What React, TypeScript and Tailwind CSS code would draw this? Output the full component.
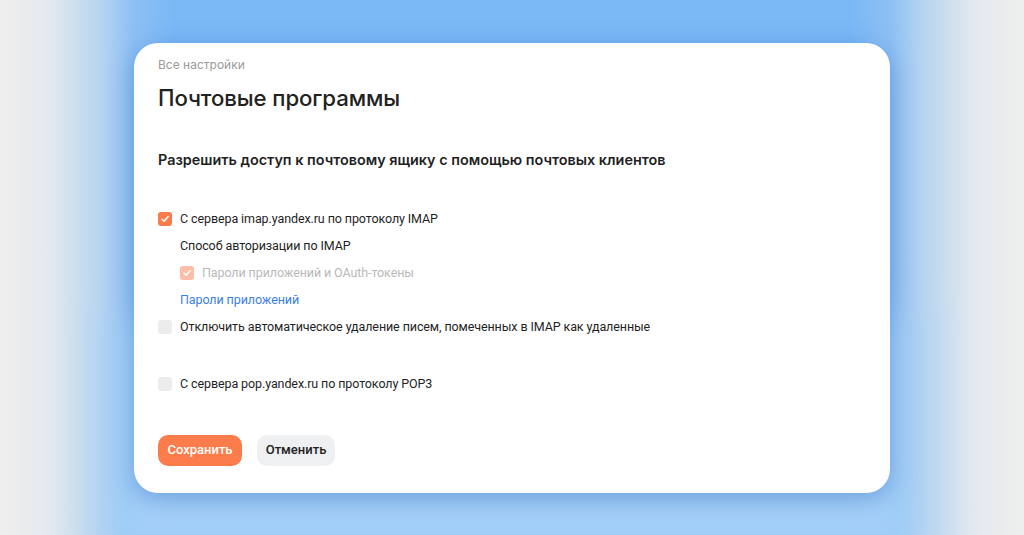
import React from "react";

function Check({ state }: { state: "on" | "faded" | "off" }) {
  const bg =
    state === "on" ? "bg-[#fc7c4c]" : state === "faded" ? "bg-[#fcbea6]" : "bg-[#ececec]";
  return (
    <span className={`flex h-[14px] w-[14px] shrink-0 items-center justify-center rounded-[3px] ${bg}`}>
      {state !== "off" && (
        <svg width="10" height="10" viewBox="0 0 10 10" fill="none">
          <path d="M2 5.2 L4.1 7.3 L8.2 2.6" stroke="white" strokeWidth="1.5" strokeLinecap="round" strokeLinejoin="round" />
        </svg>
      )}
    </span>
  );
}

export default function App() {
  return (
    <div
      className="flex h-[535px] w-[1024px] items-center justify-center overflow-hidden bg-[linear-gradient(90deg,#f0efee_0%,#e2e9ef_5%,#b5d3f0_10%,#8dc0f4_13%,#7ab8f6_17%,#7ab8f6_83%,#8dc0f4_87%,#b5d3f0_90%,#e2e9ef_95%,#efefee_100%)]"
      style={{ fontFamily: "Inter, 'Noto Sans', sans-serif" }}
    >
      <div className="relative">
        <div className="absolute inset-x-[-20px] bottom-[-60px] top-[60%] bg-[#a6d1f8] blur-[20px]" />
        <div className="relative flex h-[450px] w-[756px] flex-col rounded-[24px] bg-white pl-[24px] pt-[14px] shadow-[0_6px_24px_rgba(60,120,200,0.55)]">
          <div className="text-[12px] leading-[16px] text-[#9a9a9a]">Все настройки</div>
          <div className="mt-[11px] text-[22.2px] font-medium leading-[28px] tracking-[-0.1px] text-[#222]">
            Почтовые программы
          </div>
          <div className="mt-[38px] text-[14.4px] font-semibold leading-[20px] text-[#1f1f1f]">
            Разрешить доступ к почтовому ящику с помощью почтовых клиентов
          </div>
          <div
            className="mt-[36px] flex flex-col text-[12.5px] tracking-[-0.1px] text-[#1f1f1f]"
            style={{ fontFamily: "Roboto, 'Noto Sans', sans-serif" }}
          >
            <div className="flex h-[27px] items-center gap-[8px]">
              <Check state="on" />
              <span>С сервера imap.yandex.ru по протоколу IMAP</span>
            </div>
            <div className="flex h-[27px] items-center pl-[22px]">Способ авторизации по IMAP</div>
            <div className="flex h-[27px] items-center gap-[8px] pl-[22px]">
              <Check state="faded" />
              <span className="text-[#b9b9b9]">Пароли приложений и OAuth-токены</span>
            </div>
            <div className="flex h-[27px] items-center pl-[22px] text-[#3c7fe3]">Пароли приложений</div>
            <div className="flex h-[27px] items-center gap-[8px]">
              <Check state="off" />
              <span>Отключить автоматическое удаление писем, помеченных в IMAP как удаленные</span>
            </div>
            <div className="mt-[30px] flex h-[27px] items-center gap-[8px]">
              <Check state="off" />
              <span>С сервера pop.yandex.ru по протоколу POP3</span>
            </div>
          </div>
          <div
            className="mt-[37px] flex gap-[15px] text-[13px] font-medium"
            style={{ fontFamily: "Roboto, 'Noto Sans', sans-serif" }}
          >
            <button className="h-[31px] w-[84px] rounded-[10px] bg-[#fc7c4c] text-white">Сохранить</button>
            <button className="h-[31px] w-[78px] rounded-[10px] bg-[#eef0f2] text-[#222]">Отменить</button>
          </div>
        </div>
      </div>
    </div>
  );
}
